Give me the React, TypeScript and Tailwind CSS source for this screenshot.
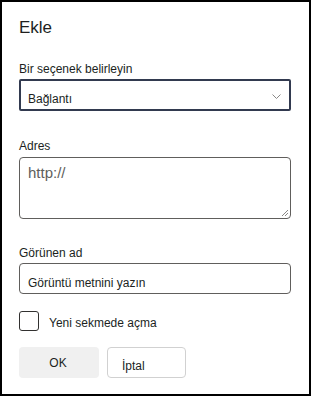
import React from 'react';

const font = { fontFamily: '"Liberation Sans", Arial, sans-serif' };

const Label: React.FC<{ children: React.ReactNode; className?: string }> = ({ children, className }) => (
  <div className={`text-[12px] leading-[16px] text-[#201f1e] ${className ?? ''}`}>{children}</div>
);

export default function App() {
  return (
    <div
      className="w-[311px] h-[396px] border-2 border-black bg-white pl-[17px] pr-[18px] pt-[14px]"
      style={font}
    >
      <h1 className="text-[17px] leading-[24px] text-[#201f1e]">Ekle</h1>

      <Label className="mt-[21px]">Bir seçenek belirleyin</Label>
      <div className="mt-[2px] h-[32px] border-2 border-[#323a4f] rounded-[2px] flex justify-between pl-[7px] pr-[8px]">
        <span className="pt-[10px] text-[12px] leading-[16px] text-[#201f1e]">Bağlantı</span>
        <svg className="mt-[13px]" width="9" height="5" viewBox="0 0 9 5" fill="none">
          <path d="M0.5 0.5 L4.5 4.5 L8.5 0.5" stroke="#8a8886" strokeWidth="1" />
        </svg>
      </div>

      <Label className="mt-[27px]">Adres</Label>
      <div className="relative mt-[3px] h-[62px] border border-[#605e5c] rounded-[4px] px-[8px] pt-[5px]">
        <span className="block text-[15px] leading-[20px] text-[#605e5c]">http://</span>
        <svg className="absolute right-[1px] bottom-[1px]" width="8" height="8" viewBox="0 0 8 8">
          <path d="M7 1 L1 7 M7 4 L4 7" stroke="#8a8886" strokeWidth="1" />
        </svg>
      </div>

      <Label className="mt-[26px]">Görünen ad</Label>
      <div className="mt-[2px] h-[31px] border border-[#605e5c] rounded-[4px] px-[8px] pt-[11px]">
        <span className="block text-[12px] leading-[16px] text-[#201f1e]">Görüntü metnini yazın</span>
      </div>

      <div className="mt-[17px] flex items-center gap-[10px]">
        <div className="w-[20px] h-[20px] border border-[#323130] rounded-[3px]" />
        <span className="pt-[4px] text-[12px] leading-[16px] text-[#201f1e]">Yeni sekmede açma</span>
      </div>

      <div className="mt-[16px] flex gap-[8px]">
        <button className="w-[80px] h-[31px] rounded-[4px] bg-[#f0f0f0] text-[12px] leading-[16px] text-[#201f1e] flex justify-center pt-[8px] pr-[2px]">
          OK
        </button>
        <button className="w-[79px] h-[31px] rounded-[4px] border border-[#d1d1d1] bg-white text-[12px] leading-[16px] text-[#201f1e] flex pl-[14px] pt-[10px]">
          İptal
        </button>
      </div>
    </div>
  );
}
